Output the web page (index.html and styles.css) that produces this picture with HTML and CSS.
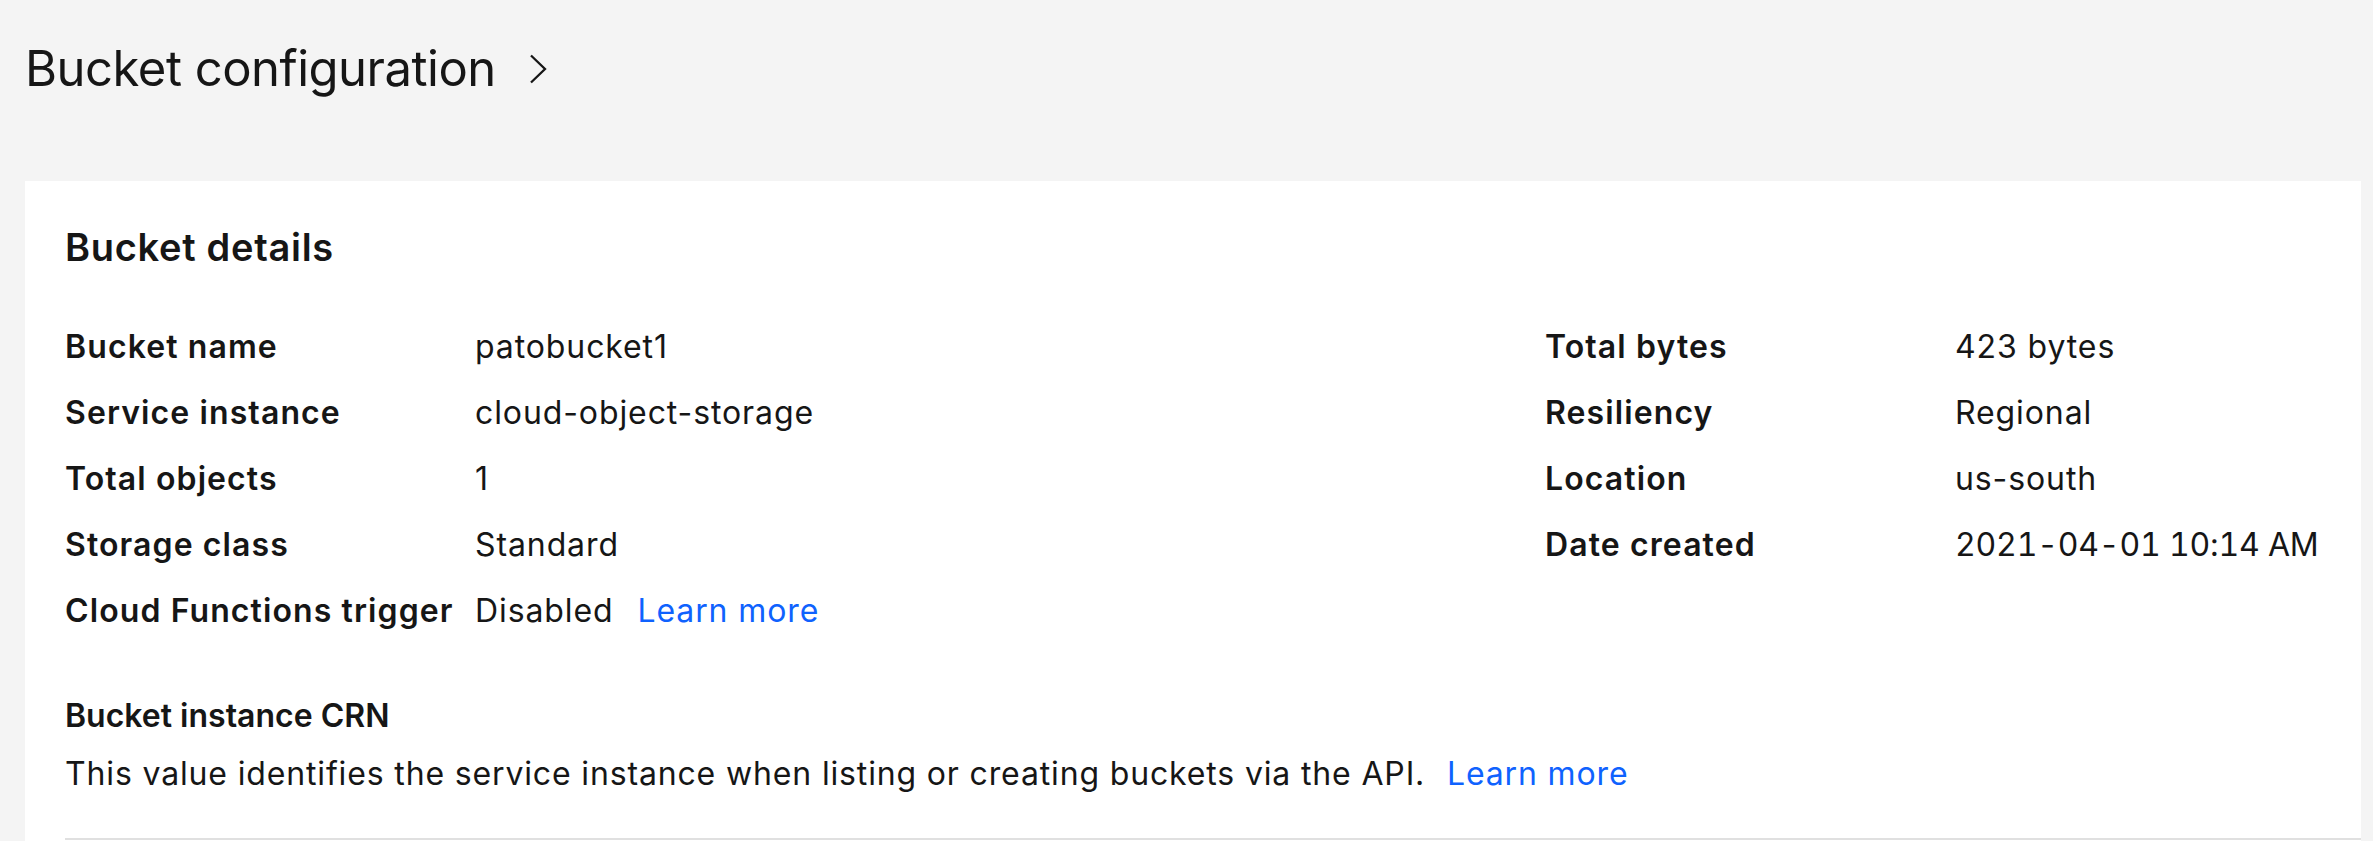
FILE: index.html
```html
<!DOCTYPE html>
<html lang="en">
<head>
<meta charset="utf-8">
<title>Bucket configuration</title>
<link rel="stylesheet" href="styles.css">
</head>
<body>
<div class="page">
  <header class="page-header">
    <h1 class="page-title">Bucket configuration</h1>
    <svg class="chevron" width="20" height="30" viewBox="0 0 20 30" aria-hidden="true">
      <polyline points="3,1.5 17,15 3,28.5" fill="none" stroke="#161616" stroke-width="2.3"/>
    </svg>
  </header>
  <section class="card">
    <h2 class="card-title">Bucket details</h2>
    <div class="details">
      <dl class="detail-list detail-left">
        <dt>Bucket name</dt><dd>patobucket1</dd>
        <dt>Service instance</dt><dd>cloud-object-storage</dd>
        <dt>Total objects</dt><dd>1</dd>
        <dt>Storage class</dt><dd>Standard</dd>
        <dt>Cloud Functions trigger</dt><dd>Disabled <a class="link link-inline" href="#">Learn more</a></dd>
      </dl>
      <dl class="detail-list detail-right">
        <dt>Total bytes</dt><dd>423 bytes</dd>
        <dt>Resiliency</dt><dd>Regional</dd>
        <dt>Location</dt><dd>us-south</dd>
        <dt>Date created</dt><dd class="numeric">2021-04-01 10:14 AM</dd>
      </dl>
    </div>
    <h3 class="crn-title">Bucket instance CRN</h3>
    <p class="crn-desc">This value identifies the service instance when listing or creating buckets via the API. <a class="link link-desc" href="#">Learn more</a></p>
    <div class="crn-box"></div>
  </section>
</div>
</body>
</html>
```
FILE: styles.css
```css
html, body {
  margin: 0;
  padding: 0;
}
body {
  background: #f4f4f4;
  color: #161616;
  font-family: Inter, "Noto Sans", "Liberation Sans", sans-serif;
  overflow: hidden;
}
.page {
  padding: 0 12px 0 25px;
}
.page-header {
  display: flex;
  align-items: center;
  gap: 32px;
  padding: 39px 0 82px 0;
}
.page-title {
  margin: 0;
  font-size: 49px;
  font-weight: 400;
  line-height: 60px;
  letter-spacing: -0.5px;
}
.chevron {
  display: block;
  flex: none;
}
.card {
  background: #ffffff;
  padding: 42px 40px 0 40px;
  min-height: 700px;
}
.card-title {
  margin: 0;
  font-size: 38px;
  font-weight: 600;
  line-height: 48px;
  letter-spacing: 0.7px;
}
.details {
  display: flex;
  margin-top: 43px;
}
.detail-list {
  display: grid;
  grid-template-columns: 410px auto;
  grid-auto-rows: 66px;
  margin: 0;
  font-size: 32px;
  line-height: 66px;
}
.detail-left {
  width: 1480px;
  flex: none;
}
.detail-list dt {
  font-weight: 600;
  white-space: nowrap;
  letter-spacing: 1.1px;
}
.detail-list dd {
  margin: 0;
  white-space: nowrap;
  letter-spacing: 0.9px;
}
.detail-list dd.numeric {
  font-variant-numeric: tabular-nums;
  letter-spacing: -0.2px;
}
.link {
  color: #0f62fe;
  text-decoration: none;
}
.link-inline {
  margin-left: 14px;
}
.crn-title {
  margin: 48px 0 0 0;
  font-size: 32px;
  font-weight: 600;
  line-height: 48px;
}
.crn-desc {
  margin: 10px 0 0 0;
  font-size: 32px;
  line-height: 48px;
  letter-spacing: 0.85px;
}
.link-desc {
  margin-left: 12px;
}
.crn-box {
  margin: 40px -40px 0 0;
  border-top: 2px solid #e0e0e0;
  height: 60px;
}
```
